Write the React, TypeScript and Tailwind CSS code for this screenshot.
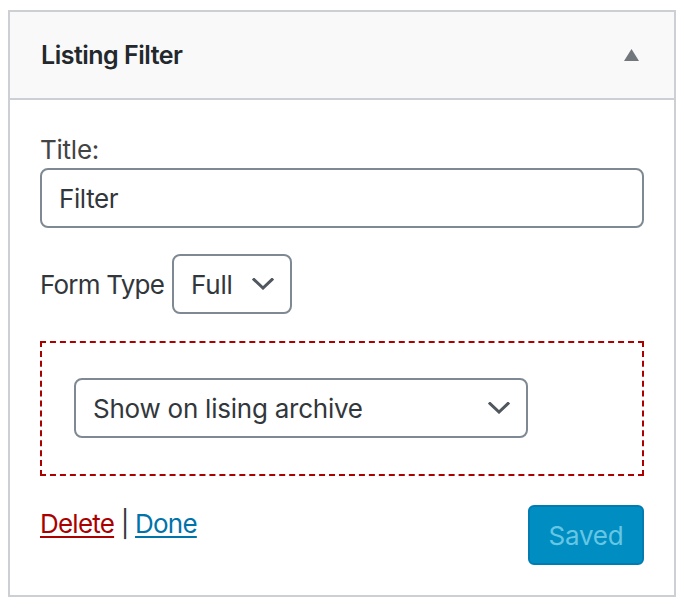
import React from 'react';

const font = { fontFamily: 'Inter, "Noto Sans", sans-serif' };

const Chevron: React.FC = () => (
  <svg width="22" height="12" viewBox="0 0 22 12" fill="none" className="shrink-0">
    <path d="M2 1.5 L11 10 L20 1.5" stroke="#50575e" strokeWidth="3" strokeLinecap="square" />
  </svg>
);

interface FakeSelectProps {
  label: string;
  className: string;
}

const FakeSelect: React.FC<FakeSelectProps> = ({ label, className }) => (
  <div
    className={`h-[60px] flex items-center justify-between border-2 border-[#7e8993] rounded-[8px] bg-white pl-[17px] pr-[16px] text-[26px] text-[#32373c] ${className}`}
  >
    <span>{label}</span>
    <Chevron />
  </div>
);

export default function App() {
  return (
    <div className="pl-[8px] pt-[10px] tracking-[-0.015em]" style={font}>
      <div className="w-[668px] border-2 border-[#ccd0d4] bg-white">
        <div className="h-[88px] bg-[#f9f9f9] border-b-2 border-[#ccd0d4] flex items-center justify-between pl-[31px] pr-[35px]">
          <h3 className="text-[25px] font-semibold text-[#23282d] leading-none tracking-[-0.02em]">Listing Filter</h3>
          <svg width="15" height="12" viewBox="0 0 15 12">
            <path d="M7.5 0 L15 12 L0 12 Z" fill="#72777c" />
          </svg>
        </div>

        <div className="px-[30px] pt-[32px] pb-[30px]">
          <label className="block text-[26px] leading-[36px] text-[#444]">Title:</label>
          <input
            readOnly
            value="Filter"
            className="block w-full h-[60px] mt-0 border-2 border-[#7e8993] rounded-[8px] px-[17px] text-[26px] text-[#32373c] outline-none tracking-[-0.015em]"
          />

          <div className="flex items-center gap-[8px] mt-[26px]">
            <span className="text-[26px] text-[#32373c] tracking-[-0.03em]">Form Type</span>
            <FakeSelect label="Full" className="w-[120px]" />
          </div>

          <div className="mt-[27px] border-2 border-dashed border-[#a00] pl-[32px] pt-[35px] pb-[36px]">
            <FakeSelect label="Show on lising archive" className="w-[454px]" />
          </div>

          <div className="flex items-start justify-between mt-[29px]">
            <div className="text-[26px] leading-[36px] text-[#32373c] pt-[1px] tracking-[-0.03em]">
              <a href="#" className="text-[#a00] underline decoration-2 underline-offset-[3px]">Delete</a>
              <span className="text-[#32373c]"> | </span>
              <a href="#" className="text-[#0073aa] underline decoration-2 underline-offset-[3px]">Done</a>
            </div>
            <button className="w-[116px] h-[60px] rounded-[6px] bg-[#008ec2] border-2 border-[#007cb2] text-[#66c6e4] text-[26px]">
              Saved
            </button>
          </div>
        </div>
      </div>
    </div>
  );
}
